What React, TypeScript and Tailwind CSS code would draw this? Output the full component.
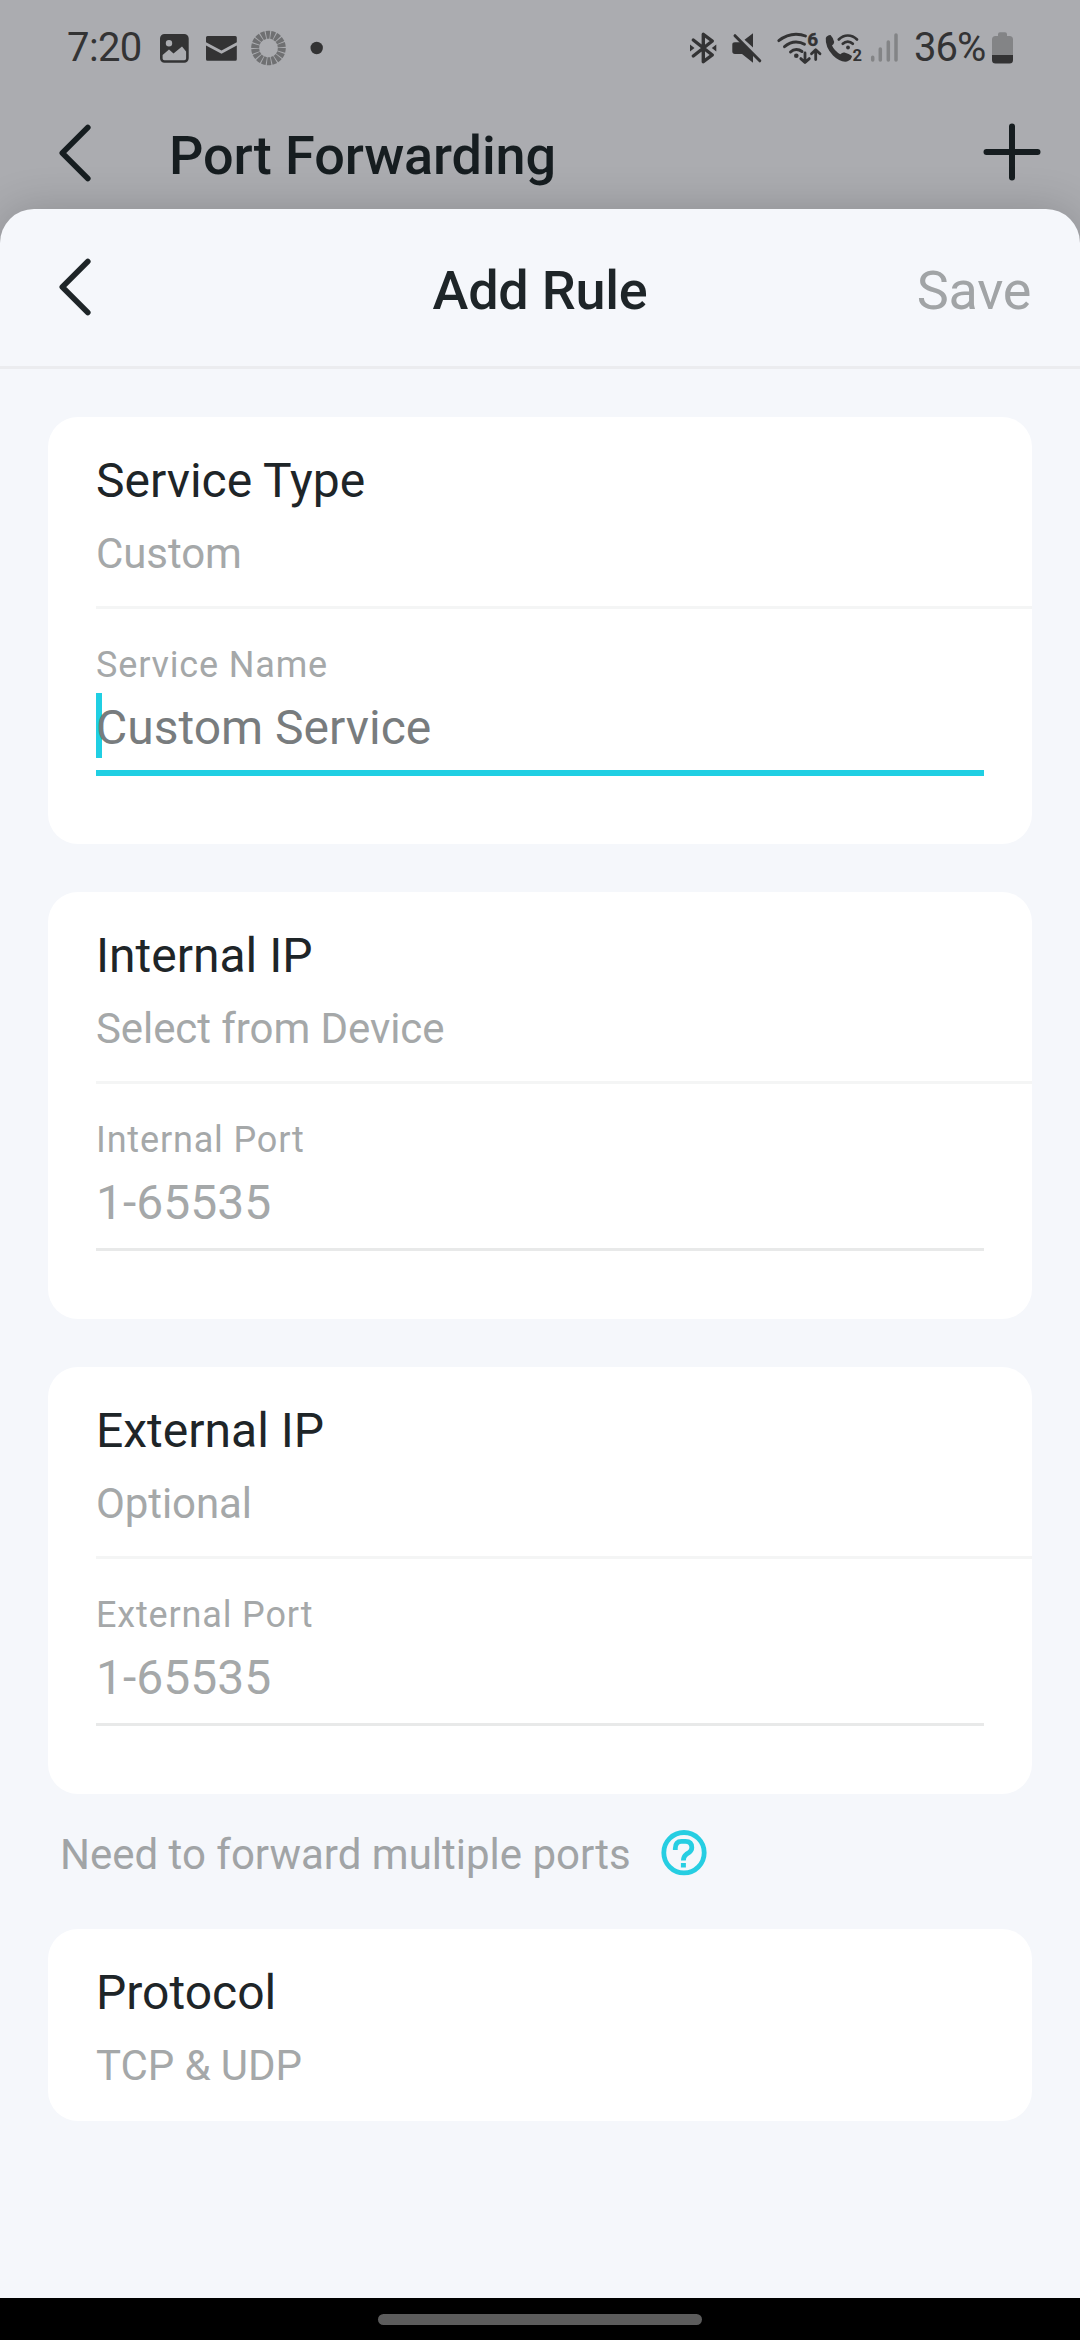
import React from "react";

const INK = "#333334";
const MUTED = "#838486";

function Chevron({ className = "" }: { className?: string }) {
  return (
    <svg className={className} width="34" height="58" viewBox="0 0 34 58" fill="none" stroke="currentColor" strokeWidth="5.6" strokeLinecap="round" strokeLinejoin="round">
      <path d="M29.800 3.400L4.300 29L29.800 54.600" />
    </svg>
  );
}

function PlusIcon() {
  return (
    <svg width="58" height="56" viewBox="0 0 58 56" fill="none" stroke="currentColor" strokeWidth="6" strokeLinecap="round" className="overflow-visible">
      <path d="M3.500 28H54.500M29 2.500V53.500" />
    </svg>
  );
}

function NotificationIcons() {
  return (
    <svg width="170" height="48" viewBox="0 0 170 48" fill={INK}>
      <path fillRule="evenodd" d="M9.500 10H29.200A4.500 4.500 0 0 1 33.700 14.500V34.200A4.500 4.500 0 0 1 29.200 38.700H9.500A4.500 4.500 0 0 1 5 34.200V14.500A4.500 4.500 0 0 1 9.500 10ZM7.600 31V34.500Q7.600 36.300 9.400 36.300H29.300Q31.100 36.300 31.100 34.500V27.500L27 22.500L18.500 29.500L14 25.500ZM14 16A3.200 3.200 0 1 0 14 22.400A3.200 3.200 0 1 0 14 16Z" />
      <path d="M52.500 12H80.300Q81.800 12 81.800 13.500V18.300L66.500 26.500L51 18.300V13.500Q51 12 52.500 12ZM51 21.500L66.500 29.800L81.800 21.500V35.300Q81.800 36.800 80.300 36.800H52.500Q51 36.800 51 35.300Z" />
      <circle cx="113.500" cy="24" r="13.300" fill="none" stroke="#6f7072" strokeWidth="8" pathLength="180" strokeDasharray="8 2" />
      <circle cx="161.700" cy="24" r="6.200" />
    </svg>
  );
}

function SystemIcons() {
  return (
    <svg width="218" height="48" viewBox="0 0 218 48" fill="none" stroke={INK} strokeLinecap="round" strokeLinejoin="round">
      {/* bluetooth */}
      <path d="M9.300 16L28.300 31L19.300 37.700V10.300L28.300 17L9.300 32" strokeWidth="3.400" />
      <path d="M6 20.500L10.500 24L6 27.500ZM32.300 20.500L27.800 24L32.300 27.500Z" fill={INK} stroke="none" />
      {/* muted speaker */}
      <path d="M51 18.300H57.500L69 30.500V38.800L58 29.900H51Q48.300 29.900 48.300 27.500V20.500Q48.300 18.300 51 18.300ZM60.500 15.800L69 9.300V23.500Z" fill={INK} stroke="none" />
      <path d="M51 11.700L75.800 36.800" strokeWidth="3" />
      {/* wifi 6 with traffic arrows */}
      <path d="M94.800 16.700Q103 10.300 112 10.300Q117.500 10.300 121.500 12M100.500 22.700Q106 18 112 18Q117 18 120.500 20.300M106.500 28Q109 25.500 112.300 25.500Q115.500 25.500 118 27.500" strokeWidth="2.900" />
      <circle cx="112.300" cy="31.700" r="2.300" fill={INK} stroke="none" />
      <path d="M121 29V38.300M116.800 34.600L121 38.500L125.300 34.600M131.700 35.500V26M127.500 29.800L131.700 25.800L136 29.800" strokeWidth="2.800" />
      <text x="123.200" y="22.200" fill={INK} stroke={INK} strokeWidth="0.400" fontSize="19" fontWeight="700" fontFamily="Roboto">6</text>
      {/* wifi calling */}
      <path d="M141.800 14Q142.800 11.300 146.500 11Q149.500 14 150.200 18Q150 20 148 21.500Q150.500 27 156.300 30.300Q158.500 28 160.500 28.500Q165 29.500 168 32Q167.500 36 163 37.500Q156 38.500 149 31.500Q141 23 141.800 14Z" fill={INK} stroke="none" />
      <path d="M154.800 15.500Q158.800 11.500 163.800 11.500Q169 11.500 173 15.500M158.800 19.800Q161 17.600 163.800 17.600Q166.600 17.600 168.800 19.800" strokeWidth="2.700" />
      <circle cx="164" cy="23.500" r="1.900" fill={INK} stroke="none" />
      <text x="168.600" y="36.800" fill={INK} stroke="none" fontSize="16.500" fontWeight="700" fontFamily="Roboto">2</text>
      {/* cell signal */}
      <path d="M188.700 33.300V36M196.300 25V36M204.300 18V36M212 11V36" stroke={MUTED} strokeWidth="3.500" />
    </svg>
  );
}

function BatteryIcon() {
  return (
    <svg width="24" height="48" viewBox="0 0 24 48" fill={MUTED}>
      <path d="M8 10.300Q8 8.300 10 8.300H15Q17 8.300 17 10.300V12H19.500Q23 12 23 15.500V31H2V15.500Q2 12 5.500 12H8Z" />
      <path d="M2 31H23V36Q23 39.500 19.500 39.500H5.500Q2 39.500 2 36Z" fill={INK} />
    </svg>
  );
}

function HelpIcon() {
  return (
    <svg width="46" height="46" viewBox="0 0 46 46" fill="none" stroke="#26cee2">
      <circle cx="23" cy="22.700" r="20.200" strokeWidth="4.800" />
      <path d="M14.300 20V18.500Q14.300 11.300 20.500 11.300H24.500Q30.800 11.300 30.800 17.500Q30.800 20.500 28 22.500L25.300 24.300Q22.400 26.500 22.400 30.500" strokeWidth="4.800" />
      <path d="M22.400 33V37.500" strokeWidth="5" />
    </svg>
  );
}

function StatusBar() {
  return (
    <div className="flex h-24 items-start justify-between pl-[67px] pr-[66px] pt-6 text-[40px] leading-[47px] text-[#333334]">
      <div className="flex">
        <span className="w-[88px] tracking-[-0.6px]">7:20</span>
        <NotificationIcons />
      </div>
      <div className="flex">
        <SystemIcons />
        <span className="ml-3 w-[76px] tracking-[-1px]">36%</span>
        <BatteryIcon />
      </div>
    </div>
  );
}

function AppBar() {
  return (
    <div className="flex h-[113px] items-start pl-[58px] pr-[39px] pt-7 text-[#161d20]">
      <Chevron />
      <h1 className="ml-[77px] flex-1 text-[54px] font-medium leading-[63px] tracking-[-0.1px]">Port Forwarding</h1>
      <PlusIcon />
    </div>
  );
}

function SheetHeader() {
  return (
    <header className="grid h-[160px] grid-cols-[1fr_auto_1fr] items-start border-b-[3px] border-[#ebecef] pl-[58px] pr-[49px] pt-[50px] text-[54px] leading-[63px] text-[#1e2528]">
      <Chevron className="-mt-px" />
      <h2 className="-ml-[9px] font-medium tracking-[-0.25px]">Add Rule</h2>
      <button className="justify-self-end tracking-[-0.3px] text-[#a1a4a6]">Save</button>
    </header>
  );
}

function Summary({ title, value }: { title: string; value: string }) {
  return (
    <>
      <h3 className="text-[48px] leading-[56px] text-[#1e2528]">{title}</h3>
      <p className="mt-5 text-[42px] leading-[49px] tracking-[-0.08px] text-[#a5a8a9]">{value}</p>
    </>
  );
}

type FieldCardProps = { title: string; value: string; label: string; placeholder: string; active?: boolean };

function FieldCard({ title, value, label, placeholder, active }: FieldCardProps) {
  return (
    <section className="h-[427px] rounded-[30px] bg-white pl-12 pt-9">
      <Summary title={title} value={value} />
      <div className="mt-7 h-[3px] bg-[#f4f5f5]" />
      <div className="mt-[35px] text-[36px] leading-[42px] tracking-[0.84px] text-[#a5a8a9]">{label}</div>
      <div
        className={
          active
            ? "relative mr-12 mt-3.5 h-[76px] border-b-[6px] border-[#20cfe3] text-[48px] leading-[56px] text-[#787c7e]"
            : "mr-12 mt-3.5 h-[76px] border-b-[3px] border-[#e8e9e9] text-[48px] leading-[56px] text-[#a5a8a9]"
        }
      >
        {active && <span className="absolute -top-[7px] left-0 h-[65px] w-1.5 bg-[#20cfe3]" />}
        <span className="relative">{placeholder}</span>
      </div>
    </section>
  );
}

export default function App() {
  return (
    <div className="flex h-[2340px] w-[1080px] flex-col overflow-hidden bg-[#abacb0] font-['Roboto',sans-serif]">
      <StatusBar />
      <AppBar />
      <main className="relative flex-1 rounded-t-[34px] bg-[#f5f7fb] shadow-[0_0_44px_rgba(0,0,0,0.18)]">
        <SheetHeader />
        <div className="mt-12 flex flex-col gap-12 px-12">
          <FieldCard title="Service Type" value="Custom" label="Service Name" placeholder="Custom Service" active />
          <FieldCard title="Internal IP" value="Select from Device" label="Internal Port" placeholder="1-65535" />
          <FieldCard title="External IP" value="Optional" label="External Port" placeholder="1-65535" />
        </div>
        <div className="flex h-[135px] items-start pl-[60px] pt-9 text-[42px] leading-[49px] text-[#a1a4a6]">
          <span className="w-[601px]">Need to forward multiple ports</span>
          <HelpIcon />
        </div>
        <section className="mx-12 h-48 rounded-[30px] bg-white pl-12 pt-9">
          <Summary title="Protocol" value="TCP & UDP" />
        </section>
      </main>
      <div className="relative flex h-[42px] justify-center bg-black pt-4">
        <div className="h-[11px] w-[324px] rounded-full bg-[#5c5c5c]" />
      </div>
    </div>
  );
}
